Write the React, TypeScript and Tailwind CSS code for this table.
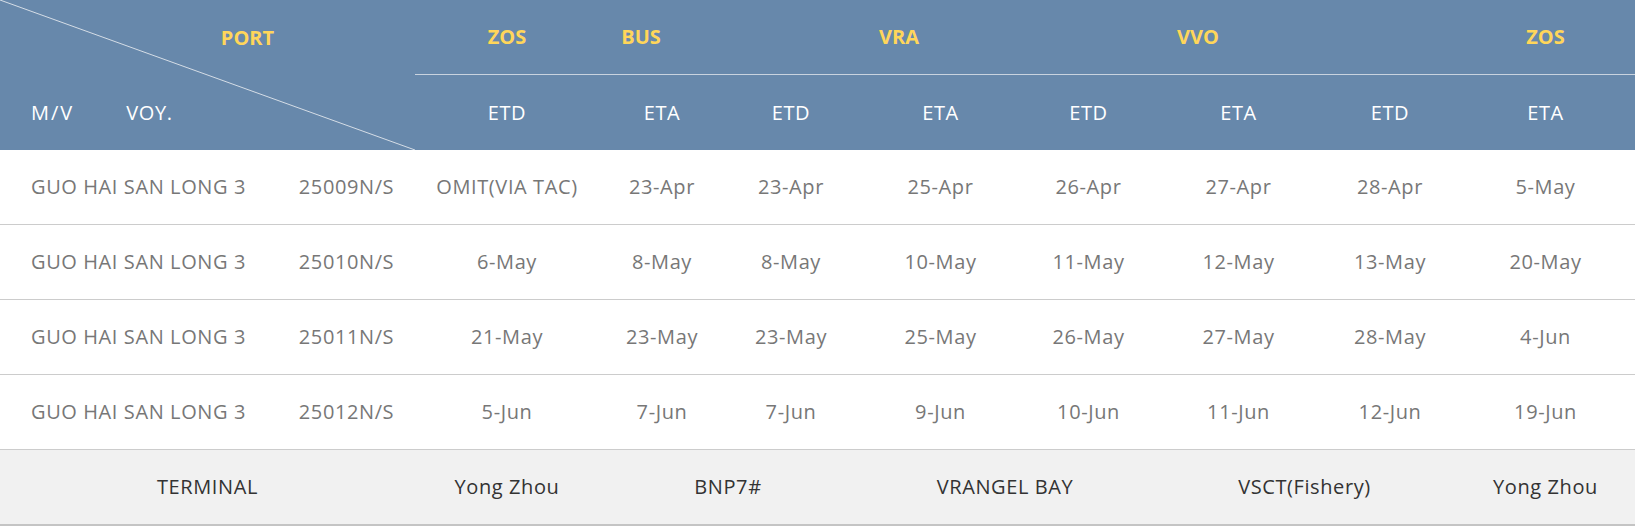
const cols = "grid-cols-[184px_126px_132px_167px_129px_171px_132px_179px]";

const subHeads = ["ETD", "ETA", "ETD", "ETA", "ETD", "ETA", "ETD", "ETA"];

const rows = [
  { vessel: "GUO HAI SAN LONG 3", voy: "25009N/S", dates: ["OMIT(VIA TAC)", "23-Apr", "23-Apr", "25-Apr", "26-Apr", "27-Apr", "28-Apr", "5-May"] },
  { vessel: "GUO HAI SAN LONG 3", voy: "25010N/S", dates: ["6-May", "8-May", "8-May", "10-May", "11-May", "12-May", "13-May", "20-May"] },
  { vessel: "GUO HAI SAN LONG 3", voy: "25011N/S", dates: ["21-May", "23-May", "23-May", "25-May", "26-May", "27-May", "28-May", "4-Jun"] },
  { vessel: "GUO HAI SAN LONG 3", voy: "25012N/S", dates: ["5-Jun", "7-Jun", "7-Jun", "9-Jun", "10-Jun", "11-Jun", "12-Jun", "19-Jun"] },
];

export default function App() {
  return (
    <div className="w-[1635px] bg-white text-[20px] tracking-[0.6px] font-['Open_Sans',sans-serif]">
      {/* header */}
      <div className="grid grid-cols-[415px_1fr] h-[150px] bg-[#6788ab] text-white">
        <div className="relative">
          <svg className="absolute inset-0" width="415" height="150" viewBox="0 0 415 150">
            <line x1="0" y1="0" x2="415" y2="150" stroke="#d5dde6" strokeWidth="1" />
          </svg>
          <div className="h-[75px] flex items-center justify-center pl-[80px] font-bold text-[#ffd65a] tracking-normal">PORT</div>
          <div className="h-[75px] flex items-center pl-[31px] gap-[52px]">
            <span className="tracking-[2px]">M/V</span>
            <span>VOY.</span>
          </div>
        </div>
        <div>
          <div className="h-[75px] grid grid-cols-[184px_84px_432px_166px_1fr_179px] items-center text-center font-bold text-[#ffd65a] tracking-normal border-b border-[#c9d3df]">
            <span>ZOS</span>
            <span>BUS</span>
            <span>VRA</span>
            <span>VVO</span>
            <span></span>
            <span>ZOS</span>
          </div>
          <div className={`h-[75px] grid ${cols} items-center text-center`}>
            {subHeads.map((s, i) => (
              <span key={i}>{s}</span>
            ))}
          </div>
        </div>
      </div>

      {/* rows */}
      {rows.map((r) => (
        <div key={r.voy} className="grid grid-cols-[278px_137px_1fr] h-[75px] items-center border-b border-[#cccccc] text-[#777777]">
          <span className="pl-[31px]">{r.vessel}</span>
          <span className="text-center">{r.voy}</span>
          <div className={`grid ${cols} text-center`}>
            {r.dates.map((d, i) => (
              <span key={i}>{d}</span>
            ))}
          </div>
        </div>
      ))}

      {/* terminal */}
      <div className="grid grid-cols-[415px_184px_258px_296px_303px_179px] h-[76px] items-center text-center bg-[#f1f1f1] text-[#333333] border-b-2 border-[#c4c4c4]">
        <span>TERMINAL</span>
        <span>Yong Zhou</span>
        <span>BNP7#</span>
        <span>VRANGEL BAY</span>
        <span>VSCT(Fishery)</span>
        <span>Yong Zhou</span>
      </div>
    </div>
  );
}
